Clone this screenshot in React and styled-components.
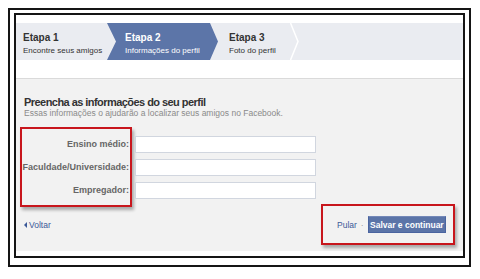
import * as React from 'react';
import styled, { createGlobalStyle } from 'styled-components';

const GlobalStyle = createGlobalStyle`
  body {
    margin: 0;
    background: #fff;
    font-family: "Liberation Sans", Arial, sans-serif;
  }
`;

const steps = [
  { title: 'Etapa 1', sub: 'Encontre seus amigos' },
  { title: 'Etapa 2', sub: 'Informações do perfil', active: true },
  { title: 'Etapa 3', sub: 'Foto do perfil' },
];

const fields = ['Ensino médio:', 'Faculdade/Universidade:', 'Empregador:'];

export default function App() {
  return (
    <React.Fragment>
      <GlobalStyle />
      <OuterFrame>
        <InnerFrame>
          <StepBar>
            {steps.map((step, i) => (
              <Step key={step.title} $active={step.active} $index={i}>
                <StepTitle>{step.title}</StepTitle>
                <StepSub>{step.sub}</StepSub>
              </Step>
            ))}
            <Chevron width="9" height="37" viewBox="0 0 9 37">
              <polyline points="0.5,0 8,18.5 0.5,37" fill="none" stroke="#fff" strokeWidth="1.5" />
            </Chevron>
          </StepBar>

          <Section>
            <Heading>Preencha as informações do seu perfil</Heading>
            <Sub>Essas informações o ajudarão a localizar seus amigos no Facebook.</Sub>

            <Form>
              <LabelBox>
                {fields.map((f) => (
                  <Label key={f}>{f}</Label>
                ))}
              </LabelBox>
              <Inputs>
                {fields.map((f) => (
                  <Input key={f} type="text" />
                ))}
              </Inputs>
            </Form>

            <Footer>
              <Back>
                <Arrow />
                Voltar
              </Back>
              <ActionBox>
                <Skip>Pular</Skip>
                <Dot>·</Dot>
                <SaveButton>Salvar e continuar</SaveButton>
              </ActionBox>
            </Footer>
          </Section>
        </InnerFrame>
      </OuterFrame>
    </React.Fragment>
  );
}

const OuterFrame = styled.div`
  margin: 8px 0 0 8px;
  width: 463px;
  height: 259px;
  box-sizing: border-box;
  border: 2px solid #151515;
  padding: 3px 4px 7px 4px;
  display: flex;
`;

const InnerFrame = styled.div`
  flex: 1;
  border: 2px solid #151515;
  background: #fff;
  padding: 8px 0 5px 0;
  display: flex;
  flex-direction: column;
`;

const StepBar = styled.div`
  height: 37px;
  flex: none;
  display: flex;
  background: #eaecf1;
`;

const Step = styled.div`
  box-sizing: border-box;
  height: 37px;
  padding-top: 8px;
  width: ${(p) => (p.$index === 0 ? '91px' : p.$index === 1 ? '111px' : '72px')};
  padding-left: ${(p) => (p.$index === 0 ? '7px' : p.$index === 1 ? '18px' : '11px')};
  background: ${(p) => (p.$active ? '#5c75a8' : 'transparent')};
  color: ${(p) => (p.$active ? '#fff' : '#333')};
  clip-path: ${(p) =>
    p.$active
      ? 'polygon(0 0, calc(100% - 8px) 0, 100% 50%, calc(100% - 8px) 100%, 0 100%, 9px 50%)'
      : 'none'};
`;

const StepTitle = styled.div`
  font-size: 10px;
  font-weight: bold;
  line-height: 13px;
`;

const StepSub = styled.div`
  font-size: 8px;
  line-height: 13px;
  white-space: nowrap;
`;

const Chevron = styled.svg`
  display: block;
  flex: none;
`;

const Section = styled.div`
  flex: 1;
  margin-top: 18px;
  border-top: 1px solid #dadada;
  background: #f2f2f2;
  padding: 17px 4px 4px 4px;
  display: flex;
  flex-direction: column;
`;

const Heading = styled.div`
  margin-left: 4px;
  font-size: 11px;
  line-height: 12px;
  font-weight: bold;
  color: #333;
  letter-spacing: -0.55px;
  white-space: nowrap;
`;

const Sub = styled.div`
  margin-left: 4px;
  font-size: 8.5px;
  line-height: 11px;
  color: #8a8a8a;
  white-space: nowrap;
`;

const Form = styled.div`
  margin-top: 8px;
  display: flex;
  align-items: flex-start;
`;

const LabelBox = styled.div`
  width: 112px;
  box-sizing: border-box;
  border: 2px solid #c8161d;
  box-shadow: 2px 3px 3px rgba(0, 0, 0, 0.3);
  padding: 7px 1px 6px 0;
  display: flex;
  flex-direction: column;
  gap: 6px;
`;

const Label = styled.div`
  height: 17px;
  line-height: 17px;
  text-align: right;
  font-size: 9px;
  font-weight: bold;
  color: #666;
  white-space: nowrap;
`;

const Inputs = styled.div`
  margin: 9px 0 0 3px;
  display: flex;
  flex-direction: column;
  gap: 6px;
`;

const Input = styled.input`
  display: block;
  width: 181px;
  height: 17px;
  box-sizing: border-box;
  margin: 0;
  border: 1px solid #d1d6df;
  background: #fff;
  outline: none;
`;

const Footer = styled.div`
  margin-top: -3px;
  display: flex;
  align-items: center;
  justify-content: space-between;
`;

const Back = styled.div`
  margin-left: 4px;
  display: flex;
  align-items: center;
  gap: 2px;
  font-size: 8.5px;
  color: #3b5998;
`;

const Arrow = styled.span`
  width: 0;
  height: 0;
  border-top: 3px solid transparent;
  border-bottom: 3px solid transparent;
  border-right: 3px solid #3b5998;
`;

const ActionBox = styled.div`
  margin-right: 4px;
  width: 134px;
  height: 41px;
  box-sizing: border-box;
  border: 2px solid #c8161d;
  box-shadow: 2px 3px 3px rgba(0, 0, 0, 0.3);
  padding: 0 7px 0 14px;
  display: flex;
  align-items: center;
`;

const Skip = styled.span`
  font-size: 8.5px;
  color: #3b5998;
`;

const Dot = styled.span`
  margin: 0 4px;
  font-size: 8.5px;
  color: #999;
`;

const SaveButton = styled.button`
  margin: 0 0 0 auto;
  height: 17px;
  width: 84px;
  box-sizing: border-box;
  padding: 0;
  border: 1px solid #4a64a0;
  border-top-color: #7488b8;
  background: #5b74a8;
  color: #fff;
  font-family: "Liberation Sans", Arial, sans-serif;
  font-size: 8.5px;
  font-weight: bold;
  white-space: nowrap;
`;
